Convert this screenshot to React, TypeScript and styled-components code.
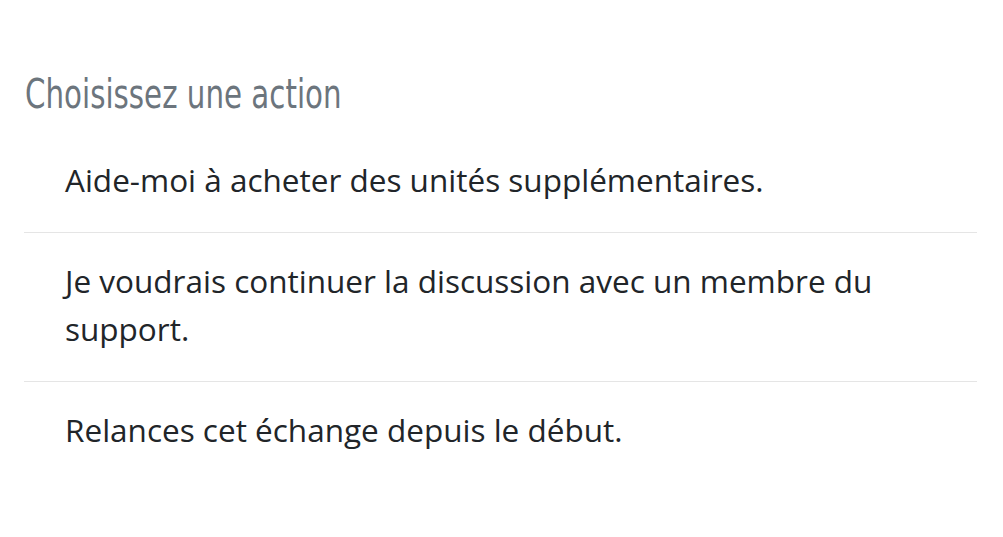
import styled, { createGlobalStyle } from "styled-components";

const actions = [
  "Aide-moi à acheter des unités supplémentaires.",
  "Je voudrais continuer la discussion avec un membre du support.",
  "Relances cet échange depuis le début.",
];

function App() {
  return (
    <>
      <GlobalStyle />
      <Panel>
        <Title>Choisissez une action</Title>
        <ActionList>
          {actions.map((label) => (
            <Action key={label}>{label}</Action>
          ))}
        </ActionList>
      </Panel>
    </>
  );
}

const GlobalStyle = createGlobalStyle`
  html, body {
    margin: 0;
    background: #ffffff;
  }
`;

const Panel = styled.div`
  padding: 70px 26px 0 24px;
  font-family: "Open Sans", "Noto Sans", sans-serif;
`;

// no condensed face installed, so squeeze a regular one
const Title = styled.h2`
  display: inline-block;
  margin: 0 0 0 1px;
  height: 62px;
  font-family: "DejaVu Sans", "Liberation Sans", sans-serif;
  font-weight: 400;
  font-size: 41px;
  line-height: 48px;
  color: #6c757d;
  white-space: nowrap;
  transform: scaleX(0.715);
  transform-origin: left center;
`;

const ActionList = styled.ul`
  list-style: none;
  margin: 0;
  padding: 0;
`;

const Action = styled.li`
  padding: 24px 40px 28px 41px;
  font-size: 31.5px;
  line-height: 48px;
  color: #212529;

  & + & {
    border-top: 1px solid #e5e5e5;
  }
`;

export default App;
